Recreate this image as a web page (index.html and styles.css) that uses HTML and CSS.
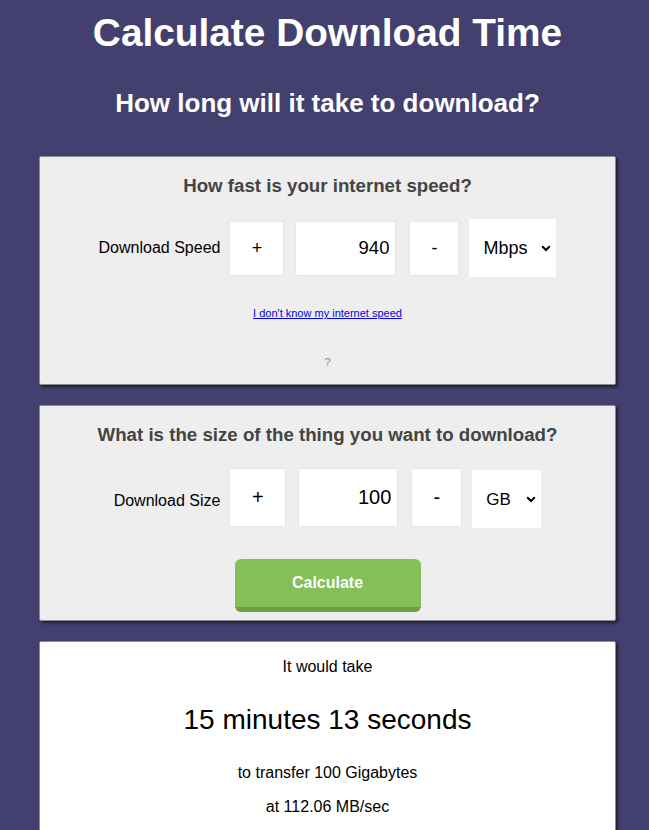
FILE: index.html
```html
<!DOCTYPE html>
<html>
<head>
<meta charset="utf-8">
<title>Calculate Download Time</title>
<link rel="stylesheet" href="styles.css">
</head>
<body>
<div class="page">
<header class="header">
  <h1 class="title">Calculate Download Time</h1>
  <h2 class="subtitle">How long will it take to download?</h2>
</header>
<main class="main">
  <section class="card">
    <h3 class="card-title">How fast is your internet speed?</h3>
    <div class="row row-speed">
      <label class="row-label">Download Speed</label>
      <button class="step step-plus">+</button>
      <input class="num" type="text" value="940">
      <button class="step step-minus">-</button>
      <div class="sel-wrap">
        <select class="sel"><option>Mbps</option></select>
        <svg class="chev" width="10" height="7" viewBox="0 0 10 7"><path d="M1.2 1.3 L5 5 L8.8 1.3" fill="none" stroke="#000" stroke-width="2"/></svg>
      </div>
    </div>
    <p class="link-line"><a class="link" href="#">I don't know my internet speed</a></p>
    <p class="qmark">?</p>
  </section>

  <section class="card card-size">
    <h3 class="card-title">What is the size of the thing you want to download?</h3>
    <div class="row row-size">
      <label class="row-label">Download Size</label>
      <button class="step step-plus">+</button>
      <input class="num" type="text" value="100">
      <button class="step step-minus">-</button>
      <div class="sel-wrap">
        <select class="sel"><option>GB</option></select>
        <svg class="chev" width="10" height="7" viewBox="0 0 10 7"><path d="M1.2 1.3 L5 5 L8.8 1.3" fill="none" stroke="#000" stroke-width="2"/></svg>
      </div>
    </div>
    <div class="btn-line"><button class="calc">Calculate</button></div>
  </section>

  <section class="card card-result">
    <p class="res-intro">It would take</p>
    <p class="res-time">15 minutes 13 seconds</p>
    <p class="res-line">to transfer 100 Gigabytes</p>
    <p class="res-line res-rate">at 112.06 MB/sec</p>
  </section>
</main>
</div>
</body>
</html>
```

FILE: styles.css
```css
html, body {
  margin: 0;
  padding: 0;
}
body {
  background: #433f6e;
  font-family: "Liberation Sans", Arial, sans-serif;
  color: #000;
}
.page {
  padding: 0 33px 0 39px;
}
.header {
  padding-top: 10px;
  text-align: center;
  color: #fff;
}
.title {
  margin: 0;
  font-size: 38.8px;
  line-height: 45px;
  font-weight: bold;
}
.subtitle {
  margin: 33px 0 0;
  font-size: 26px;
  line-height: 30px;
  font-weight: bold;
}
.main {
  padding-top: 38px;
  display: flex;
  flex-direction: column;
  gap: 20px;
}
.card {
  background: #eeeeee;
  border: 1px solid #8c8c8c;
  border-radius: 2px;
  box-shadow: 2px 2px 3px rgba(0, 0, 0, 0.55);
  padding: 18px 0 15px;
  text-align: center;
}
.card-title {
  margin: 0;
  font-size: 18.7px;
  line-height: 22px;
  font-weight: bold;
  color: #444;
}
.row {
  display: flex;
  align-items: center;
  justify-content: center;
  margin-top: 22px;
  height: 58px;
}
.row-label {
  font-size: 16px;
  margin-right: 9px;
}
.step {
  background: #fff;
  border: 1px solid #e6e6e6;
  border-radius: 2px;
  font-family: "Liberation Sans", Arial, sans-serif;
  color: #000;
  padding: 0;
  box-sizing: border-box;
}
.num {
  background: #fff;
  border: 1px solid #e6e6e6;
  border-radius: 2px;
  box-sizing: border-box;
  text-align: right;
  font-family: "Liberation Sans", Arial, sans-serif;
  color: #000;
  outline: none;
}
.row-speed .step-plus { width: 55px; height: 55px; font-size: 18px; margin-right: 11px; }
.row-speed .num { width: 101px; height: 55px; font-size: 18.5px; padding: 0 6px; margin-right: 13px; }
.row-speed .step-minus { width: 50px; height: 55px; font-size: 18px; margin-right: 10px; }
.row-speed .sel-wrap { width: 87px; height: 58px; }
.row-speed .sel { font-size: 18px; padding-left: 14px; }

.row-size { margin-top: 22px; height: 62px; }
.row-size .row-label { margin-top: 3px; }
.row-size .step-plus { width: 57px; height: 59px; font-size: 20px; margin-right: 12px; align-self: flex-start; }
.row-size .num { width: 100px; height: 59px; font-size: 20px; padding: 0 6px; margin-right: 13px; align-self: flex-start; }
.row-size .step-minus { width: 51px; height: 59px; font-size: 20px; margin-right: 10px; align-self: flex-start; }
.row-size .sel-wrap { width: 69px; height: 58px; margin-top: 2px; align-self: flex-start; }
.row-size .sel { font-size: 17px; padding-left: 14px; }

.sel-wrap {
  position: relative;
  background: #fff;
}
.sel {
  appearance: none;
  -webkit-appearance: none;
  width: 100%;
  height: 100%;
  border: none;
  background: transparent;
  font-family: "Liberation Sans", Arial, sans-serif;
  color: #000;
  outline: none;
  border-radius: 0;
  text-align: left;
}
.chev {
  position: absolute;
  right: 5px;
  top: 50%;
  margin-top: -3px;
  pointer-events: none;
}
.link-line {
  margin: 30px 0 0;
  font-size: 11px;
  line-height: 13px;
}
.link {
  color: #0000ee;
  text-decoration: underline;
}
.qmark {
  margin: 36px 0 0;
  font-size: 11px;
  line-height: 13px;
  color: #888;
}
.card-size {
  padding-bottom: 8px;
}
.btn-line {
  margin-top: 29px;
  display: flex;
  justify-content: center;
}
.calc {
  width: 186px;
  height: 53px;
  background: #84bf58;
  border: none;
  border-bottom: 5px solid #6e9d48;
  border-radius: 6px;
  color: #fff;
  font-family: "Liberation Sans", Arial, sans-serif;
  font-weight: bold;
  font-size: 16px;
  padding: 0;
  box-sizing: border-box;
}
.card-result {
  background: #fff;
  padding: 16px 0 30px;
}
.res-intro {
  margin: 0;
  font-size: 16px;
  line-height: 18px;
}
.res-time {
  margin: 28px 0 0;
  font-size: 28px;
  line-height: 32px;
}
.res-line {
  margin: 28px 0 0;
  font-size: 16px;
  line-height: 18px;
}
.res-rate {
  margin-top: 16px;
}
```
